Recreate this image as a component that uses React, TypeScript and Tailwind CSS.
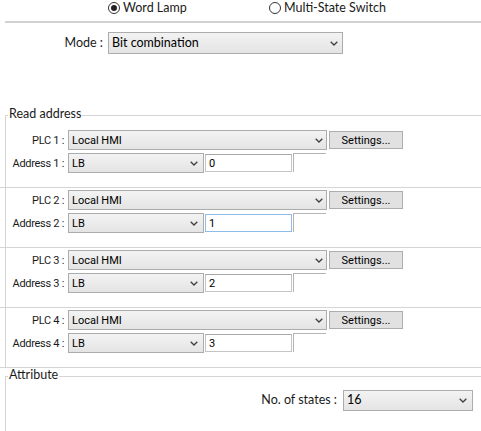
import React from "react";

const Chevron = () => (
  <svg width="8" height="5" viewBox="0 0 8 5" className="block">
    <path d="M0.7 0.7 L4 4 L7.3 0.7" fill="none" stroke="#404040" strokeWidth="1.3" />
  </svg>
);

function Select({
  value,
  className,
  textClass,
  chevClass,
}: {
  value: string;
  className: string;
  textClass: string;
  chevClass: string;
}) {
  return (
    <div
      className={`shrink-0 flex items-center justify-between border border-[#acacac] bg-linear-to-b from-[#f3f3f3] to-[#e4e4e4] ${className}`}
    >
      <span className={`pl-[3px] text-black whitespace-nowrap ${textClass}`}>{value}</span>
      <span className={chevClass}>
        <Chevron />
      </span>
    </div>
  );
}

const label = "font-['Lato',sans-serif] text-[12.5px] text-[#1a1a1a] leading-none whitespace-nowrap";
const rowLabel = "font-['Roboto',sans-serif] text-[11px] tracking-[-0.3px] text-[#1a1a1a] leading-none whitespace-nowrap";
const small = "font-['Roboto',sans-serif] text-[11px] leading-none whitespace-nowrap";

function Radio({ checked, text }: { checked: boolean; text: string }) {
  return (
    <div className="flex items-center h-[14px]">
      <div className="shrink-0 w-[12px] h-[12px] rounded-full border border-[#333] bg-white flex items-center justify-center">
        {checked && <div className="w-[6px] h-[6px] rounded-full bg-[#222]" />}
      </div>
      <span className={`ml-[3px] leading-[14px] ${label}`}>{text}</span>
    </div>
  );
}

function PlcRows({ n, addr, focus }: { n: number; addr: string; focus?: boolean }) {
  return (
    <div className="flex flex-col gap-[3px]">
      <div className="flex items-center h-[20px]">
        <div className={`w-[58px] shrink-0 text-right ${rowLabel}`}>PLC {n} :</div>
        <Select
          value="Local HMI"
          className="ml-[4px] w-[259px] h-[20px]"
          textClass={small}
          chevClass="pr-[3px]"
        />
        <div
          className={`shrink-0 ml-[2px] w-[74px] h-[18px] border border-[#adadad] bg-[#e1e1e1] flex items-center justify-center ${small} text-black`}
        >
          Settings...
        </div>
      </div>
      <div className="flex items-start h-[20px]">
        <div className={`shrink-0 w-[58px] h-[20px] flex items-center justify-end ${rowLabel}`}>
          Address {n} :
        </div>
        <Select
          value="LB"
          className="ml-[4px] w-[136px] h-[20px]"
          textClass={small}
          chevClass="pr-[5px]"
        />
        <div
          className={`shrink-0 ml-[1px] mt-[1px] w-[87px] h-[18px] border bg-white flex items-center pl-[3px] ${small} text-black ${
            focus ? "border-[#8fbbe6]" : "border-[#c4c4c4] border-t-[#a8a8a8]"
          }`}
        >
          {addr}
        </div>
        <div className="shrink-0 ml-[1px] w-[33px] h-[19px] border-l border-t border-[#b4b4b4]" />
      </div>
    </div>
  );
}

function GroupHeader({ text }: { text: string }) {
  return (
    <div className="flex h-[14px]">
      <div className="w-[5px]" />
      <div className="w-[3px] h-[7px] self-end border-l border-t border-[#d5d5d5]" />
      <span className={`${label} leading-[14px] px-[1px]`}>{text}</span>
      <div className="flex-1 h-[7px] self-end border-t border-[#d5d5d5]" />
    </div>
  );
}

export default function App() {
  return (
    <div className="w-[481px] h-[431px] bg-white overflow-hidden">
      <div className="h-[21px] pt-[1px] flex items-start">
        <div className="ml-[108px] w-[161px]">
          <Radio checked text="Word Lamp" />
        </div>
        <div>
          <Radio checked={false} text="Multi-State Switch" />
        </div>
      </div>
      <div className="ml-[5px] h-[2px] bg-[#d2d2d2]" />

      <div className="mt-[9px] flex items-center h-[22px]">
        <div className={`w-[103px] shrink-0 text-right ${label}`}>Mode :</div>
        <Select
          value="Bit combination"
          className="ml-[5px] w-[235px] h-[22px]"
          textClass={`${label} pl-[1px]`}
          chevClass="pr-[4px]"
        />
      </div>

      <div className="mt-[54px]">
        <GroupHeader text="Read address" />
        <div className="ml-[5px] border-l border-[#d5d5d5] pt-[8px] pb-[14px]">
          <PlcRows n={1} addr="0" />
        </div>
        {[2, 3, 4].map((n) => (
          <div key={n} className="border-t border-[#d5d5d5]">
            <div className="ml-[5px] border-l border-[#d5d5d5] pt-[2px] pb-[14px]">
              <PlcRows n={n} addr={String(n - 1)} focus={n === 2} />
            </div>
          </div>
        ))}
        <div className="border-t border-[#d5d5d5] h-[2px]" />
        <GroupHeader text="Attribute" />
        <div className="ml-[5px] border-l border-[#d5d5d5] pt-[7px] h-[60px]">
          <div className="flex items-center justify-end pr-[8px]">
            <span className={label}>No. of states :</span>
            <Select
              value="16"
              className="ml-[6px] w-[130px] h-[21px]"
              textClass={`${label} pl-[1px]`}
              chevClass="pr-[5px]"
            />
          </div>
        </div>
      </div>
    </div>
  );
}
